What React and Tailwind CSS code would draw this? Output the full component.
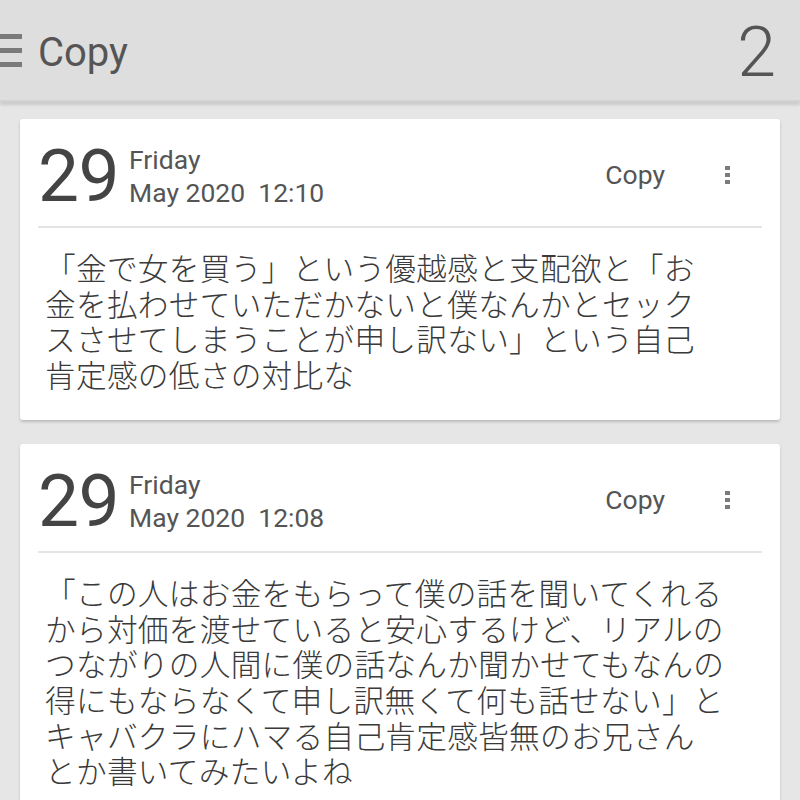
import React from 'react';

const entries = [
  {
    day: '29',
    weekday: 'Friday',
    date: 'May 2020',
    time: '12:10',
    lines: [
      '「金で女を買う」という優越感と支配欲と「お',
      '金を払わせていただかないと僕なんかとセック',
      'スさせてしまうことが申し訳ない」という自己',
      '肯定感の低さの対比な',
    ],
  },
  {
    day: '29',
    weekday: 'Friday',
    date: 'May 2020',
    time: '12:08',
    lines: [
      '「この人はお金をもらって僕の話を聞いてくれる',
      'から対価を渡せていると安心するけど、リアルの',
      'つながりの人間に僕の話なんか聞かせてもなんの',
      '得にもならなくて申し訳無くて何も話せない」と',
      'キャバクラにハマる自己肯定感皆無のお兄さん',
      'とか書いてみたいよね',
    ],
  },
];

const Kebab = () => (
  <div className="flex flex-col gap-[2.5px] items-center">
    <span className="w-[5px] h-[4.5px] bg-[#7b7b7b]" />
    <span className="w-[5px] h-[4.5px] bg-[#7b7b7b]" />
    <span className="w-[5px] h-[4.5px] bg-[#7b7b7b]" />
  </div>
);

const EntryCard = ({ entry }) => (
  <div className="bg-white rounded-[3px] shadow-[0_2px_3px_rgba(0,0,0,0.18)] pt-[21px] pb-[25px]">
    {/* date row */}
    <div className="flex items-start pl-[18px] pr-[50px]">
      <span className="text-[73px] leading-none text-[#444] tracking-[-0.5px]">{entry.day}</span>
      <div className="ml-[10px] mt-[3px] flex flex-col text-[26.5px] leading-[33px] text-[#555]">
        <span>{entry.weekday}</span>
        <span className="whitespace-pre">{entry.date}  {entry.time}</span>
      </div>
      <div className="ml-auto mt-[20px] flex items-center gap-[60px]">
        <span className="text-[26.5px] leading-[30px] text-[#555]">Copy</span>
        <Kebab />
      </div>
    </div>

    <div className="mx-[18px] mt-[13px] h-[2px] bg-[#e4e4e4]" />

    {/* body */}
    <div className="mt-[24px] pl-[25px] text-[30.7px] leading-[35.7px] tracking-[0.25px] font-light text-[#3a3a3a]">
      {entry.lines.map((line, i) => (
        <div key={i} className="whitespace-nowrap">{line}</div>
      ))}
    </div>
  </div>
);

export default function App() {
  return (
    <div
      className="h-[800px] overflow-hidden bg-[#e6e6e6]"
      style={{ fontFamily: 'Roboto, "Noto Sans CJK JP", sans-serif' }}
    >
      {/* top bar */}
      <header className="h-[102px] bg-[#dedede] flex items-center shadow-[0_3px_3px_rgba(0,0,0,0.12)] border-b-[2px] border-[#d2d2d2]">
        <div className="flex flex-col gap-[9px] w-[22px]">
          <span className="h-[5px] bg-[#7a7a7a]" />
          <span className="h-[5px] bg-[#7a7a7a]" />
          <span className="h-[5px] bg-[#7a7a7a]" />
        </div>
        <h1 className="ml-[16px] text-[40px] leading-none text-[#555] mt-[6px]">Copy</h1>
        <span className="ml-auto mr-[24px] mt-[4px] text-[70px] font-light leading-none text-[#555]">2</span>
      </header>

      <main className="flex flex-col gap-[24px] px-[20px] pt-[17px]">
        {entries.map((e, i) => (
          <EntryCard key={i} entry={e} />
        ))}
      </main>
    </div>
  );
}
